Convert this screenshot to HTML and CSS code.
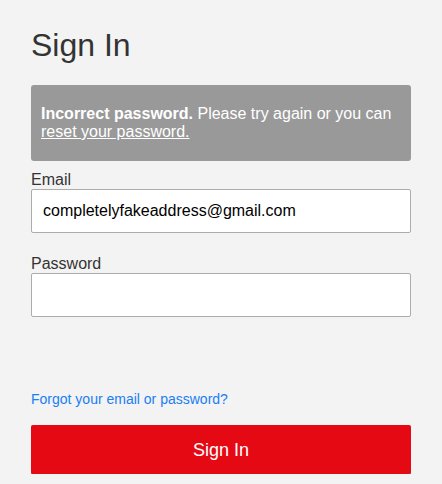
FILE: index.html
```html
<!DOCTYPE html>
<html lang="en">
<head>
<meta charset="utf-8">
<title>Sign In</title>
<link rel="stylesheet" href="styles.css">
</head>
<body>
<main class="login">
  <h1 class="login-title">Sign In</h1>
  <div class="error-box">
    <b>Incorrect password.</b> Please try again or you can <a href="#" class="error-link">reset your password.</a>
  </div>
  <form class="login-form">
    <label class="field-label field-label--first" for="email">Email</label>
    <input class="text-input" id="email" type="text" value="completelyfakeaddress@gmail.com">
    <label class="field-label field-label--second" for="password">Password</label>
    <input class="text-input" id="password" type="password" value="">
    <a href="#" class="forgot-link">Forgot your email or password?</a>
    <button type="button" class="submit-btn">Sign In</button>
  </form>
</main>
</body>
</html>
```

FILE: styles.css
```css
* {
  box-sizing: border-box;
}

html, body {
  margin: 0;
  padding: 0;
  background: #f3f3f3;
}

body {
  font-family: "Liberation Sans", Arial, sans-serif;
  color: #333;
}

.login {
  padding: 27px 31px 0 31px;
  width: 442px;
}

.login-title {
  margin: 0 0 21px 0;
  font-size: 32px;
  line-height: 37px;
  font-weight: 400;
  color: #333;
}

.error-box {
  background: #999999;
  color: #fff;
  border-radius: 3px;
  padding: 20px 10px 20px 10px;
  font-size: 16px;
  line-height: 18px;
}

.error-box b {
  font-weight: 700;
}

.error-link {
  color: #fff;
  text-decoration: underline;
}

.login-form {
  display: flex;
  flex-direction: column;
}

.field-label {
  display: block;
  font-size: 16px;
  line-height: 18px;
  color: #333;
}

.field-label--first {
  margin-top: 10px;
}

.field-label--second {
  margin-top: 22px;
}

.text-input {
  display: block;
  width: 100%;
  height: 44px;
  margin: 0;
  padding: 0 11px;
  border: 1px solid #acacac;
  border-radius: 2px;
  background: #fff;
  font-family: "Liberation Sans", Arial, sans-serif;
  font-size: 16px;
  color: #000;
  outline: none;
}

.forgot-link {
  margin-top: 74px;
  font-size: 14px;
  line-height: 16px;
  color: #1a7ef5;
  text-decoration: none;
  align-self: flex-start;
}

.submit-btn {
  margin-top: 18px;
  width: 100%;
  height: 49px;
  border: none;
  border-radius: 2px;
  background: #e50914;
  color: #fff;
  font-family: "Liberation Sans", Arial, sans-serif;
  font-size: 18px;
  box-shadow: 0 1px 0 rgba(0, 0, 0, 0.45);
  padding: 2px 0 0 0;
}
```
